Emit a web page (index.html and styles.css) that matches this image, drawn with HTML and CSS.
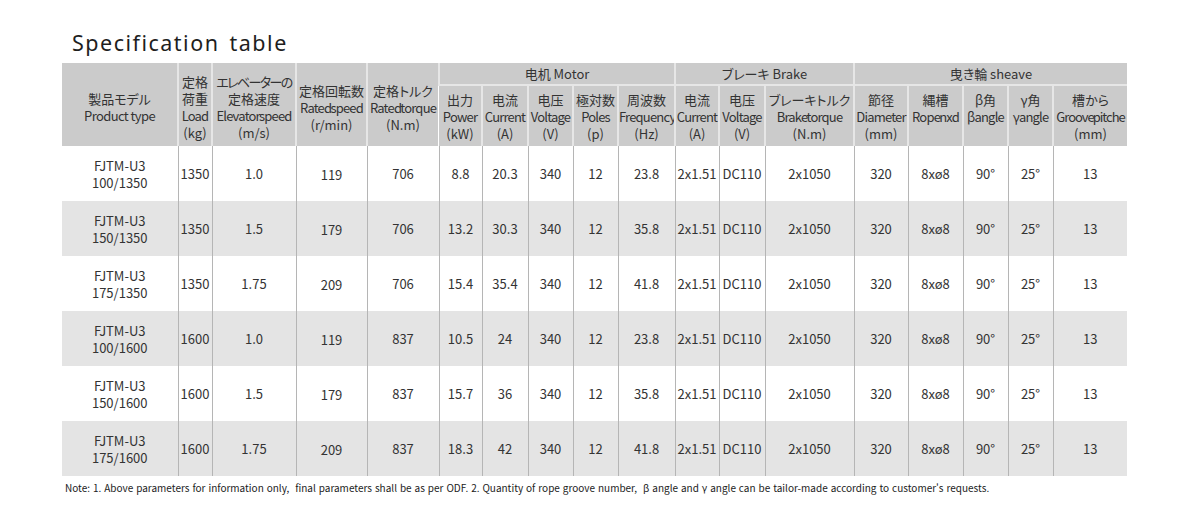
FILE: index.html
```html
<!DOCTYPE html>
<html lang="ja">
<head>
<meta charset="utf-8">
<title>Specification table</title>
<link rel="stylesheet" href="styles.css">
</head>
<body>
<div class="page">
  <h1 class="title">Specification table</h1>
  <table class="spec">
    <colgroup>
      <col style="width:116px"><col style="width:34px"><col style="width:84px"><col style="width:71px"><col style="width:72px">
      <col style="width:43px"><col style="width:46px"><col style="width:45px"><col style="width:45px"><col style="width:57px">
      <col style="width:44px"><col style="width:46px"><col style="width:89px">
      <col style="width:54px"><col style="width:55px"><col style="width:45px"><col style="width:45px"><col style="width:74px">
    </colgroup>
    <thead>
      <tr class="grp">
        <th rowspan="2" class="tall">製品モデル<br><span class="pt">Product type</span></th>
        <th rowspan="2" class="tall">定格<br>荷重<br><span class="en">Load</span><br>(kg)</th>
        <th rowspan="2" class="tall"><span class="kana">エレベーターの</span><br>定格速度<br><span class="en">Elevator speed</span><br>(m/s)</th>
        <th rowspan="2" class="tall">定格回転数<br><span class="en">Rated speed</span><br>(r/min)</th>
        <th rowspan="2" class="tall">定格トルク<br><span class="en">Rated torque</span><br>(N.m)</th>
        <th colspan="5" class="g">电机 Motor</th>
        <th colspan="3" class="g">ブレーキ Brake</th>
        <th colspan="5" class="g">曳き輪 sheave</th>
      </tr>
      <tr class="sub">
        <th>出力<br><span class="en">Power</span><br>(kW)</th>
        <th>电流<br><span class="en">Current</span><br>(A)</th>
        <th>电压<br><span class="en">Voltage</span><br>(V)</th>
        <th>極対数<br><span class="en">Poles</span><br>(p)</th>
        <th>周波数<br><span class="en">Frequency</span><br>(Hz)</th>
        <th>电流<br><span class="en">Current</span><br>(A)</th>
        <th>电压<br><span class="en">Voltage</span><br>(V)</th>
        <th>ブレーキトルク<br><span class="en">Brake torque</span><br>(N.m)</th>
        <th>節径<br><span class="en">Diameter</span><br>(mm)</th>
        <th>縄槽<br><span class="en">Rope nxd</span><br>&nbsp;</th>
        <th>β角<br><span class="en">βangle</span><br>&nbsp;</th>
        <th>γ角<br><span class="en">γangle</span><br>&nbsp;</th>
        <th>槽から<br><span class="en tight">Groove pitche</span><br>(mm)</th>
      </tr>
    </thead>
    <tbody>
      <tr><td>FJTM-U3<br>100/1350</td><td>1350</td><td>1.0</td><td class="lo">119</td><td>706</td><td>8.8</td><td>20.3</td><td>340</td><td>12</td><td>23.8</td><td>2x1.51</td><td>DC110</td><td>2x1050</td><td>320</td><td>8xø8</td><td>90°</td><td>25°</td><td>13</td></tr>
      <tr class="alt"><td>FJTM-U3<br>150/1350</td><td>1350</td><td>1.5</td><td class="lo">179</td><td>706</td><td>13.2</td><td>30.3</td><td>340</td><td>12</td><td>35.8</td><td>2x1.51</td><td>DC110</td><td>2x1050</td><td>320</td><td>8xø8</td><td>90°</td><td>25°</td><td>13</td></tr>
      <tr><td>FJTM-U3<br>175/1350</td><td>1350</td><td>1.75</td><td class="lo">209</td><td>706</td><td>15.4</td><td>35.4</td><td>340</td><td>12</td><td>41.8</td><td>2x1.51</td><td>DC110</td><td>2x1050</td><td>320</td><td>8xø8</td><td>90°</td><td>25°</td><td>13</td></tr>
      <tr class="alt"><td>FJTM-U3<br>100/1600</td><td>1600</td><td>1.0</td><td class="lo">119</td><td>837</td><td>10.5</td><td>24</td><td>340</td><td>12</td><td>23.8</td><td>2x1.51</td><td>DC110</td><td>2x1050</td><td>320</td><td>8xø8</td><td>90°</td><td>25°</td><td>13</td></tr>
      <tr><td>FJTM-U3<br>150/1600</td><td>1600</td><td>1.5</td><td class="lo">179</td><td>837</td><td>15.7</td><td>36</td><td>340</td><td>12</td><td>35.8</td><td>2x1.51</td><td>DC110</td><td>2x1050</td><td>320</td><td>8xø8</td><td>90°</td><td>25°</td><td>13</td></tr>
      <tr class="alt"><td>FJTM-U3<br>175/1600</td><td>1600</td><td>1.75</td><td class="lo">209</td><td>837</td><td>18.3</td><td>42</td><td>340</td><td>12</td><td>41.8</td><td>2x1.51</td><td>DC110</td><td>2x1050</td><td>320</td><td>8xø8</td><td>90°</td><td>25°</td><td>13</td></tr>
    </tbody>
  </table>
  <p class="note">Note: 1. Above parameters for information only,  final parameters shall be as per ODF. 2. Quantity of rope groove number,  β angle and γ angle can be tailor-made according to customer's requests.</p>
</div>
</body>
</html>
```

FILE: styles.css
```css
html, body {
  margin: 0;
  padding: 0;
  background: #ffffff;
}
.page {
  padding: 28px 0 0 62px;
  font-family: "Noto Sans CJK JP", "Noto Sans", sans-serif;
  color: #333333;
}
.title {
  margin: 0 0 6px 10px;
  font-family: "Noto Sans", "Open Sans", sans-serif;
  font-weight: 400;
  font-size: 21.5px;
  line-height: 29px;
  letter-spacing: 1.5px;
  word-spacing: 3px;
  color: #1e1e1e;
}
.spec {
  table-layout: fixed;
  width: 1065px;
  border-collapse: collapse;
  font-size: 13px;
}
.spec th {
  background: #cbcbcb;
  font-weight: 400;
  color: #333333;
  line-height: 17px;
  padding: 0;
  border-left: 2px solid #e6e6e6;
  text-align: center;
  vertical-align: middle;
  white-space: nowrap;
  overflow: hidden;
  font-feature-settings: "palt";
}
.spec thead tr th:first-child {
  border-left: none;
}
.spec .grp th.tall {
  height: 77px;
  padding-top: 5px;
}
.spec .grp th.g {
  height: 21px;
  border-bottom: 2px solid #e6e6e6;
  line-height: 20px;
}
.spec .sub th {
  height: 60px;
  border-left: 2px solid #e6e6e6;
}
.spec .en {
  letter-spacing: -0.8px;
  word-spacing: -3px;
}
.spec .en.tight {
  letter-spacing: -1px;
}
.spec .pt {
  letter-spacing: -0.6px;
}
.spec .kana {
  letter-spacing: -1.6px;
}
.spec td {
  height: 55px;
  padding: 0;
  text-align: center;
  vertical-align: middle;
  line-height: 17px;
  border-left: 1px solid #b5b5b5;
  white-space: nowrap;
}
.spec td:first-child {
  border-left: none;
}
.spec td.lo {
  height: 53px;
  padding-top: 2px;
}
.spec tr.alt td {
  background: #e4e4e4;
}
.note {
  margin: 5px 0 0 3px;
  font-size: 10px;
  line-height: 14px;
  color: #222222;
  word-spacing: 0.7px;
  white-space: pre;
}
```
